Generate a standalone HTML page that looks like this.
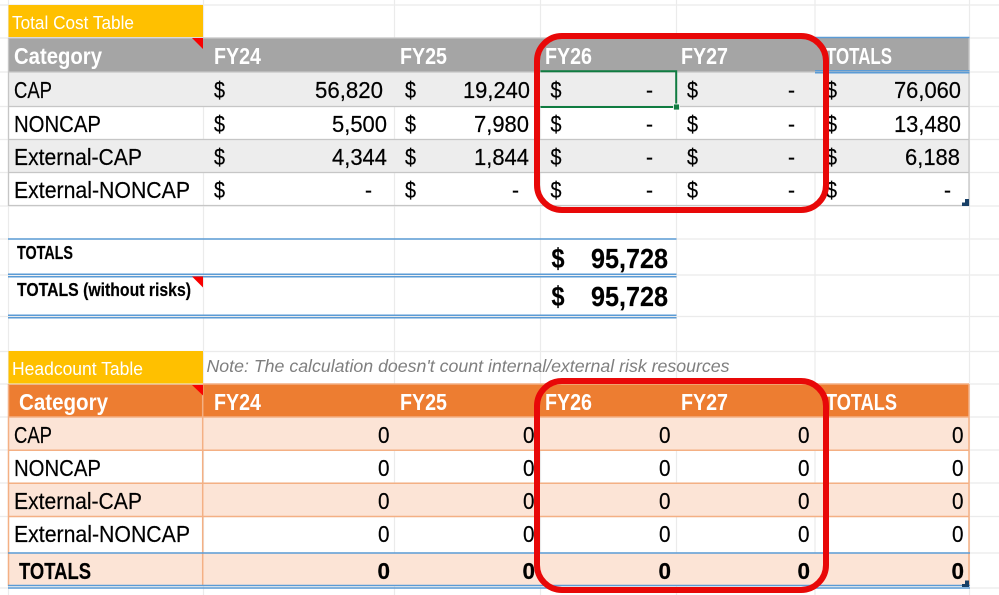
<!DOCTYPE html>
<html>
<head>
<meta charset="utf-8">
<style>
html,body{margin:0;padding:0;background:#fff;width:999px;height:595px;overflow:hidden}
svg{display:block}
text{font-family:"Liberation Sans",sans-serif;font-size:23px;fill:#000;stroke:#000;stroke-width:.2}
.h{font-size:23px;font-weight:bold;fill:#fff;stroke:none}
.l{font-size:18px;fill:#fff;stroke:none}
.b{font-weight:bold;fill:#000}
.t{font-size:18px;font-weight:bold;fill:#000}
.n{font-size:17.5px;font-style:italic;fill:#7f7f7f;stroke:none}
.g{stroke:#ebebeb;stroke-width:1.2;fill:none}
.c{stroke:#c6c6c6;stroke-width:1.3;fill:none}
.p{stroke:#f4b084;stroke-width:1.5;fill:none}
.u{stroke:#5b9bd5;stroke-width:1.5;fill:none}
</style>
</head>
<body>
<svg width="999" height="595" viewBox="0 0 999 595" xmlns="http://www.w3.org/2000/svg">
<rect width="999" height="595" fill="#fff"/>
<!-- gridlines -->
<path class="g" d="M0 5H999M0 38H999M0 72H999M0 106.500H999M0 139.500H999M0 172.500H999M0 206H999M0 239H999M0 275H999M0 316.500H999M0 351.500H999M0 384H999M0 417H999M0 450H999M0 483H999M0 516.500H999M0 553H999M0 588H999"/>
<path class="g" d="M8.500 0V595M203.500 0V595M394.500 0V595M540.500 0V595M676.500 0V595M815 0V595M969.500 0V595"/>
<!-- Cost table fills -->
<rect x="8.500" y="5" width="194.500" height="32" fill="#ffc000"/>
<rect x="9" y="38" width="960" height="34" fill="#a5a5a5"/>
<rect x="9" y="72" width="960" height="34.500" fill="#ededed"/>
<rect x="9" y="139.500" width="960" height="33" fill="#ededed"/>
<path class="c" d="M8.500 38V206M969 38V206M8.500 38H815M8.500 72H969M8.500 106.500H969M8.500 139.500H969M8.500 172.500H969M8.500 205.500H969"/>
<path class="u" d="M815 37.500H969.500M815 70.700H969.500M815 72.700H969.500"/>
<polygon points="192,38 203,38 203,49" fill="#f80000"/>
<!-- totals -->
<path class="u" d="M8 239H676.500M8 274.200H676.500M8 276.700H676.500M8 315.200H676.500M8 317.700H676.500"/>
<polygon points="192,276.500 203,276.500 203,287.500" fill="#f80000"/>
<!-- Headcount fills -->
<rect x="8.500" y="351" width="194.500" height="32.500" fill="#ffc000"/>
<rect x="9" y="384.500" width="960" height="32.500" fill="#ed7d31"/>
<rect x="9" y="417" width="960" height="33" fill="#fce4d6"/>
<rect x="9" y="483" width="960" height="33.500" fill="#fce4d6"/>
<rect x="9" y="553" width="960" height="33.500" fill="#fce4d6"/>
<path class="p" d="M8.500 384V586M202.700 384V586M969 384V586M203 384H969M8.500 417H969M8.500 450.300H969M8.500 483.300H969M8.500 516.500H969"/>
<path class="u" d="M8 553H970M8 585.500H970M8 588H970"/>
<polygon points="192,385 203,385 203,395.500" fill="#f80000"/>
<!-- labels -->
<text class="l" x="12" y="29" textLength="122" lengthAdjust="spacingAndGlyphs">Total Cost Table</text>
<text class="l" x="12" y="375" textLength="131" lengthAdjust="spacingAndGlyphs">Headcount Table</text>
<text class="n" x="206.500" y="372" textLength="523" lengthAdjust="spacingAndGlyphs">Note: The calculation doesn't count internal/external risk resources</text>
<!-- Cost header -->
<text class="h" x="14" y="64" textLength="88" lengthAdjust="spacingAndGlyphs">Category</text>
<text class="h" x="214" y="64" textLength="47" lengthAdjust="spacingAndGlyphs">FY24</text>
<text class="h" x="400" y="64" textLength="47" lengthAdjust="spacingAndGlyphs">FY25</text>
<text class="h" x="545" y="64" textLength="47" lengthAdjust="spacingAndGlyphs">FY26</text>
<text class="h" x="681" y="64" textLength="47" lengthAdjust="spacingAndGlyphs">FY27</text>
<text class="h" x="826" y="64" textLength="66" lengthAdjust="spacingAndGlyphs">TOTALS</text>
<!-- Cost rows -->
<text x="14" y="98" textLength="38" lengthAdjust="spacingAndGlyphs">CAP</text>
<text x="14" y="132" textLength="87" lengthAdjust="spacingAndGlyphs">NONCAP</text>
<text x="14" y="165" textLength="128" lengthAdjust="spacingAndGlyphs">External-CAP</text>
<text x="14" y="198" textLength="176" lengthAdjust="spacingAndGlyphs">External-NONCAP</text>
<g>
<text x="214" y="98" textLength="11" lengthAdjust="spacingAndGlyphs">$</text>
<text x="214" y="132" textLength="11" lengthAdjust="spacingAndGlyphs">$</text>
<text x="214" y="165" textLength="11" lengthAdjust="spacingAndGlyphs">$</text>
<text x="214" y="198" textLength="11" lengthAdjust="spacingAndGlyphs">$</text>
<text x="405" y="98" textLength="11" lengthAdjust="spacingAndGlyphs">$</text>
<text x="405" y="132" textLength="11" lengthAdjust="spacingAndGlyphs">$</text>
<text x="405" y="165" textLength="11" lengthAdjust="spacingAndGlyphs">$</text>
<text x="405" y="198" textLength="11" lengthAdjust="spacingAndGlyphs">$</text>
<text x="550.500" y="98" textLength="11" lengthAdjust="spacingAndGlyphs">$</text>
<text x="550.500" y="132" textLength="11" lengthAdjust="spacingAndGlyphs">$</text>
<text x="550.500" y="165" textLength="11" lengthAdjust="spacingAndGlyphs">$</text>
<text x="550.500" y="198" textLength="11" lengthAdjust="spacingAndGlyphs">$</text>
<text x="687" y="98" textLength="11" lengthAdjust="spacingAndGlyphs">$</text>
<text x="687" y="132" textLength="11" lengthAdjust="spacingAndGlyphs">$</text>
<text x="687" y="165" textLength="11" lengthAdjust="spacingAndGlyphs">$</text>
<text x="687" y="198" textLength="11" lengthAdjust="spacingAndGlyphs">$</text>
<text x="826" y="98" textLength="11" lengthAdjust="spacingAndGlyphs">$</text>
<text x="826" y="132" textLength="11" lengthAdjust="spacingAndGlyphs">$</text>
<text x="826" y="165" textLength="11" lengthAdjust="spacingAndGlyphs">$</text>
<text x="826" y="198" textLength="11" lengthAdjust="spacingAndGlyphs">$</text>
</g>
<text x="315" y="98" textLength="68" lengthAdjust="spacingAndGlyphs">56,820</text>
<text x="332" y="132" textLength="55" lengthAdjust="spacingAndGlyphs">5,500</text>
<text x="332" y="165" textLength="55" lengthAdjust="spacingAndGlyphs">4,344</text>
<text x="463" y="98" textLength="67" lengthAdjust="spacingAndGlyphs">19,240</text>
<text x="474" y="132" textLength="55" lengthAdjust="spacingAndGlyphs">7,980</text>
<text x="474" y="165" textLength="55" lengthAdjust="spacingAndGlyphs">1,844</text>
<text x="894" y="98" textLength="67" lengthAdjust="spacingAndGlyphs">76,060</text>
<text x="894" y="132" textLength="67" lengthAdjust="spacingAndGlyphs">13,480</text>
<text x="905" y="165" textLength="55" lengthAdjust="spacingAndGlyphs">6,188</text>
<g>
<text x="365" y="198" textLength="7" lengthAdjust="spacingAndGlyphs">-</text>
<text x="512" y="198" textLength="7" lengthAdjust="spacingAndGlyphs">-</text>
<text x="646" y="98" textLength="7" lengthAdjust="spacingAndGlyphs">-</text>
<text x="646" y="132" textLength="7" lengthAdjust="spacingAndGlyphs">-</text>
<text x="646" y="165" textLength="7" lengthAdjust="spacingAndGlyphs">-</text>
<text x="646" y="198" textLength="7" lengthAdjust="spacingAndGlyphs">-</text>
<text x="788" y="98" textLength="7" lengthAdjust="spacingAndGlyphs">-</text>
<text x="788" y="132" textLength="7" lengthAdjust="spacingAndGlyphs">-</text>
<text x="788" y="165" textLength="7" lengthAdjust="spacingAndGlyphs">-</text>
<text x="788" y="198" textLength="7" lengthAdjust="spacingAndGlyphs">-</text>
<text x="944" y="198" textLength="7" lengthAdjust="spacingAndGlyphs">-</text>
</g>
<!-- selection -->
<path d="M540.500 71.300H676.200V107H540.500" fill="none" stroke="#107c41" stroke-width="2"/>
<rect x="673.500" y="104" width="6" height="6" fill="#107c41" stroke="#fff" stroke-width="0.8"/>
<!-- handles -->
<path d="M962 206V202.500H965V199H969V206Z" fill="#173f66"/>
<path d="M962 587V584H965V580.500H969V587Z" fill="#173f66"/>
<!-- totals text -->
<text class="t" x="17" y="259" textLength="56" lengthAdjust="spacingAndGlyphs">TOTALS</text>
<text class="t" x="17" y="296" textLength="174" lengthAdjust="spacingAndGlyphs">TOTALS (without risks)</text>
<text class="b" style="font-size:28px" x="551.500" y="268" textLength="13" lengthAdjust="spacingAndGlyphs">$</text>
<text class="b" style="font-size:28px" x="591" y="268" textLength="77" lengthAdjust="spacingAndGlyphs">95,728</text>
<text class="b" style="font-size:28px" x="551.500" y="306" textLength="13" lengthAdjust="spacingAndGlyphs">$</text>
<text class="b" style="font-size:28px" x="591" y="306" textLength="77" lengthAdjust="spacingAndGlyphs">95,728</text>
<!-- Headcount header -->
<text class="h" x="19" y="410" textLength="89" lengthAdjust="spacingAndGlyphs">Category</text>
<text class="h" x="214" y="410" textLength="47" lengthAdjust="spacingAndGlyphs">FY24</text>
<text class="h" x="400" y="410" textLength="47" lengthAdjust="spacingAndGlyphs">FY25</text>
<text class="h" x="545" y="410" textLength="47" lengthAdjust="spacingAndGlyphs">FY26</text>
<text class="h" x="681" y="410" textLength="47" lengthAdjust="spacingAndGlyphs">FY27</text>
<text class="h" x="826" y="410" textLength="71" lengthAdjust="spacingAndGlyphs">TOTALS</text>
<!-- Headcount rows -->
<text x="14" y="443" textLength="38" lengthAdjust="spacingAndGlyphs">CAP</text>
<text x="14" y="476" textLength="87" lengthAdjust="spacingAndGlyphs">NONCAP</text>
<text x="14" y="509" textLength="128" lengthAdjust="spacingAndGlyphs">External-CAP</text>
<text x="14" y="542" textLength="176" lengthAdjust="spacingAndGlyphs">External-NONCAP</text>
<text class="b" x="19" y="579" textLength="72" lengthAdjust="spacingAndGlyphs">TOTALS</text>
<g>
<text x="378" y="443" textLength="11.500" lengthAdjust="spacingAndGlyphs">0</text>
<text x="378" y="476" textLength="11.500" lengthAdjust="spacingAndGlyphs">0</text>
<text x="378" y="509" textLength="11.500" lengthAdjust="spacingAndGlyphs">0</text>
<text x="378" y="542" textLength="11.500" lengthAdjust="spacingAndGlyphs">0</text>
<text class="b" x="377.500" y="579" textLength="12.500" lengthAdjust="spacingAndGlyphs">0</text>
<text x="523" y="443" textLength="11.500" lengthAdjust="spacingAndGlyphs">0</text>
<text x="523" y="476" textLength="11.500" lengthAdjust="spacingAndGlyphs">0</text>
<text x="523" y="509" textLength="11.500" lengthAdjust="spacingAndGlyphs">0</text>
<text x="523" y="542" textLength="11.500" lengthAdjust="spacingAndGlyphs">0</text>
<text class="b" x="522.500" y="579" textLength="12.500" lengthAdjust="spacingAndGlyphs">0</text>
<text x="659" y="443" textLength="11.500" lengthAdjust="spacingAndGlyphs">0</text>
<text x="659" y="476" textLength="11.500" lengthAdjust="spacingAndGlyphs">0</text>
<text x="659" y="509" textLength="11.500" lengthAdjust="spacingAndGlyphs">0</text>
<text x="659" y="542" textLength="11.500" lengthAdjust="spacingAndGlyphs">0</text>
<text class="b" x="658.500" y="579" textLength="12.500" lengthAdjust="spacingAndGlyphs">0</text>
<text x="798" y="443" textLength="11.500" lengthAdjust="spacingAndGlyphs">0</text>
<text x="798" y="476" textLength="11.500" lengthAdjust="spacingAndGlyphs">0</text>
<text x="798" y="509" textLength="11.500" lengthAdjust="spacingAndGlyphs">0</text>
<text x="798" y="542" textLength="11.500" lengthAdjust="spacingAndGlyphs">0</text>
<text class="b" x="797.500" y="579" textLength="12.500" lengthAdjust="spacingAndGlyphs">0</text>
<text x="952" y="443" textLength="11.500" lengthAdjust="spacingAndGlyphs">0</text>
<text x="952" y="476" textLength="11.500" lengthAdjust="spacingAndGlyphs">0</text>
<text x="952" y="509" textLength="11.500" lengthAdjust="spacingAndGlyphs">0</text>
<text x="952" y="542" textLength="11.500" lengthAdjust="spacingAndGlyphs">0</text>
<text class="b" x="951.500" y="579" textLength="12.500" lengthAdjust="spacingAndGlyphs">0</text>
</g>
<!-- red annotations -->
<rect x="537" y="36" width="289" height="174" rx="25" ry="25" fill="none" stroke="#e80808" stroke-width="6"/>
<rect x="537" y="381" width="289" height="209" rx="25" ry="25" fill="none" stroke="#e80808" stroke-width="6"/>
</svg>
</body>
</html>
